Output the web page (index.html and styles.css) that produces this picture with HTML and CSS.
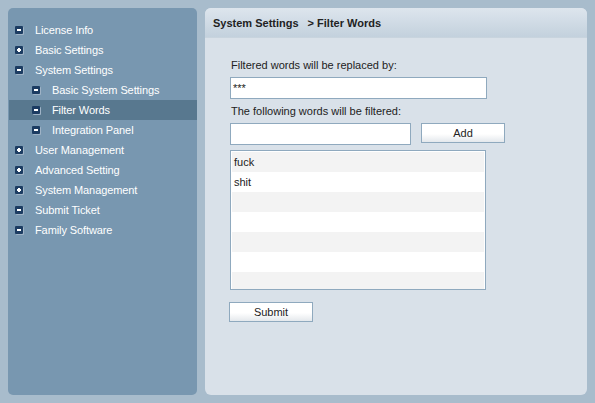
FILE: index.html
```html
<!DOCTYPE html>
<html>
<head>
<meta charset="utf-8">
<link rel="stylesheet" href="styles.css">
</head>
<body>
<div class="frame">
  <nav class="sidebar">
    <div class="item"><span class="ico minus"></span>License Info</div>
    <div class="item"><span class="ico plus"></span>Basic Settings</div>
    <div class="item"><span class="ico minus"></span>System Settings</div>
    <div class="item sub"><span class="ico minus"></span>Basic System Settings</div>
    <div class="item sub active"><span class="ico minus"></span>Filter Words</div>
    <div class="item sub"><span class="ico minus"></span>Integration Panel</div>
    <div class="item"><span class="ico plus"></span>User Management</div>
    <div class="item"><span class="ico plus"></span>Advanced Setting</div>
    <div class="item"><span class="ico plus"></span>System Management</div>
    <div class="item"><span class="ico minus"></span>Submit Ticket</div>
    <div class="item"><span class="ico minus"></span>Family Software</div>
  </nav>
  <main class="main">
    <div class="header"><span>System Settings</span><span class="crumb">&gt; Filter Words</span></div>
    <div class="content">
      <div class="label">Filtered words will be replaced by:</div>
      <div class="field wide">***</div>
      <div class="label second">The following words will be filtered:</div>
      <div class="addrow">
        <div class="field narrow"></div>
        <div class="btn add">Add</div>
      </div>
      <div class="list">
        <div class="row">fuck</div>
        <div class="row">shit</div>
        <div class="row"></div>
        <div class="row"></div>
        <div class="row"></div>
        <div class="row"></div>
        <div class="row last"></div>
      </div>
      <div class="btn submit">Submit</div>
    </div>
  </main>
</div>
</body>
</html>
```

FILE: styles.css
```css
html, body {
  margin: 0;
  padding: 0;
}
body {
  background: #a8bccc;
  font-family: "Liberation Sans", Arial, sans-serif;
  font-size: 11px;
  width: 595px;
  height: 403px;
  overflow: hidden;
}
.frame {
  display: flex;
  gap: 8px;
  padding: 8px 8px 8px 8px;
  height: 403px;
  box-sizing: border-box;
}
.sidebar {
  width: 189px;
  flex: none;
  background: #7897b0;
  border-radius: 5px;
  padding-top: 12px;
  box-sizing: border-box;
}
.item {
  height: 20px;
  display: flex;
  align-items: center;
  color: #fff;
  padding-left: 7px;
  letter-spacing: -0.1px;
}
.item.sub {
  padding-left: 24px;
}
.item.active {
  background: #58788f;
  margin-left: 1px;
  padding-left: 23px;
}
.ico {
  position: relative;
  width: 8px;
  height: 8px;
  background: #1c3c62;
  border-radius: 1px;
  margin-right: 12px;
  box-shadow: 1px 1px 0 #9fb3c6;
  flex: none;
}
.ico::before {
  content: "";
  position: absolute;
  left: 2px;
  top: 3px;
  width: 4px;
  height: 2px;
  background: #fff;
}
.ico.plus::after {
  content: "";
  position: absolute;
  left: 3px;
  top: 2px;
  width: 2px;
  height: 4px;
  background: #fff;
}
.main {
  flex: 1;
  background: #d9e1e9;
  border-radius: 6px;
  overflow: hidden;
}
.header {
  height: 29px;
  background: linear-gradient(#dde5ed, #c3d1dd);
  display: flex;
  align-items: center;
  padding-left: 8px;
  font-weight: bold;
  color: #222;
  border-bottom: 1px solid #c8d4de;
}
.crumb {
  margin-left: 9px;
}
.content {
  padding: 19px 0 0 25px;
}
.label {
  color: #222;
  height: 16px;
  line-height: 16px;
  margin-left: 1px;
}
.label.second {
  margin-top: 4px;
}
.field {
  background: #fff;
  border: 1px solid #8fa9be;
  box-sizing: border-box;
  height: 22px;
  line-height: 20px;
  padding-left: 2px;
  color: #222;
}
.field.wide {
  width: 257px;
  margin-top: 4px;
}
.addrow {
  display: flex;
  gap: 10px;
  margin-top: 4px;
  align-items: flex-start;
}
.field.narrow {
  width: 181px;
}
.btn {
  border: 1px solid #8fa9be;
  background: linear-gradient(#fff 55%, #e4e8ec);
  box-sizing: border-box;
  text-align: center;
  color: #222;
  height: 20px;
  line-height: 18px;
}
.btn.add {
  width: 84px;
}
.list {
  margin-top: 5px;
  width: 256px;
  height: 140px;
  box-sizing: border-box;
  border: 1px solid #8fa9be;
  background: #fff;
  padding: 1px;
  overflow: hidden;
}
.row {
  height: 20px;
  line-height: 20px;
  padding-left: 2px;
  color: #222;
}
.row:nth-child(odd) {
  background: #f3f3f3;
}
.submit {
  margin-top: 12px;
  width: 84px;
  margin-left: -1px;
}
```
